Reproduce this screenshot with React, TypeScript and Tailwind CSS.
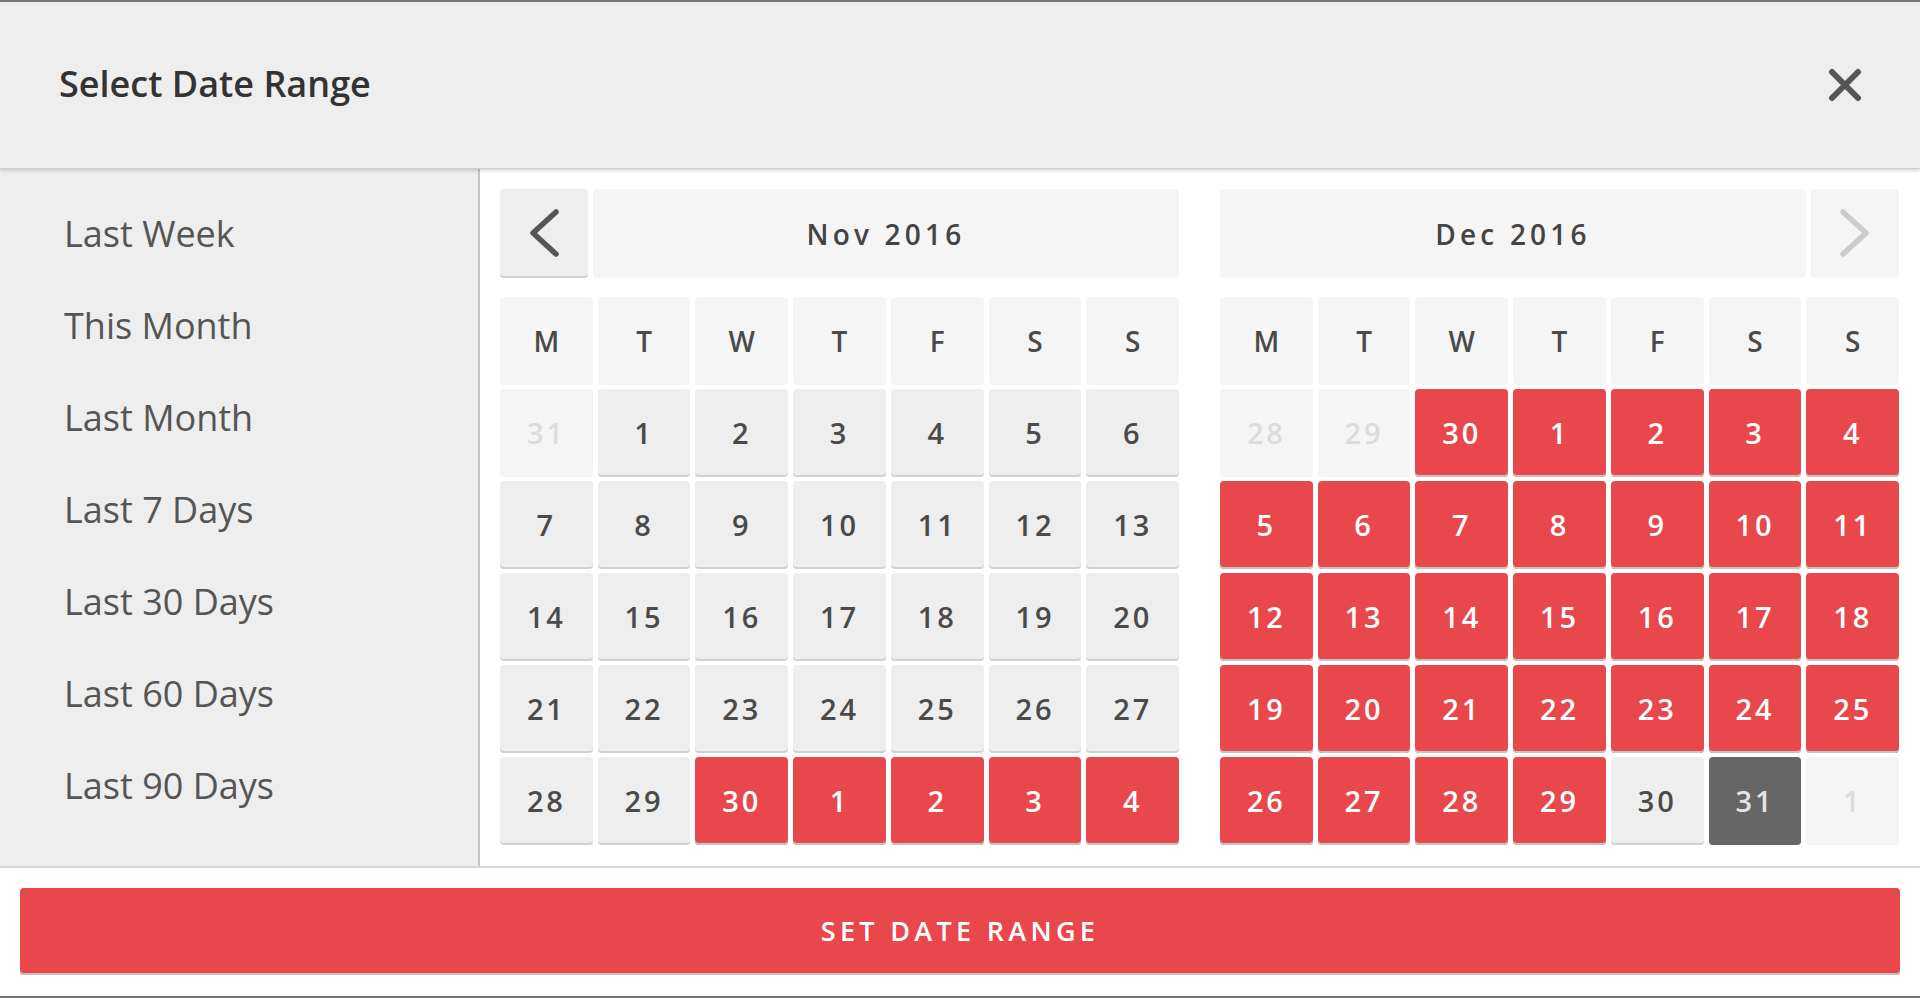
import React from "react";

type Kind = "out" | "normal" | "sel" | "dark";
type Cell = { d: number; k: Kind };

const WEEK = ["M", "T", "W", "T", "F", "S", "S"];

const r = (arr: number[], k: Kind): Cell[] => arr.map((d) => ({ d, k }));

const NOV: Cell[][] = [
  [{ d: 31, k: "out" }, ...r([1, 2, 3, 4, 5, 6], "normal")],
  r([7, 8, 9, 10, 11, 12, 13], "normal"),
  r([14, 15, 16, 17, 18, 19, 20], "normal"),
  r([21, 22, 23, 24, 25, 26, 27], "normal"),
  [...r([28, 29], "normal"), ...r([30, 1, 2, 3, 4], "sel")],
];

const DEC: Cell[][] = [
  [...r([28, 29], "out"), ...r([30, 1, 2, 3, 4], "sel")],
  r([5, 6, 7, 8, 9, 10, 11], "sel"),
  r([12, 13, 14, 15, 16, 17, 18], "sel"),
  r([19, 20, 21, 22, 23, 24, 25], "sel"),
  [...r([26, 27, 28, 29], "sel"), { d: 30, k: "normal" }, { d: 31, k: "dark" }, { d: 1, k: "out" }],
];

const SIDE = [
  "Last Week",
  "This Month",
  "Last Month",
  "Last 7 Days",
  "Last 30 Days",
  "Last 60 Days",
  "Last 90 Days",
];

function DayCell({ c }: { c: Cell }) {
  const base =
    "flex-1 h-[88px] rounded-[4px] flex items-center justify-center text-[29px] font-semibold tracking-[0.1em]";
  if (c.k === "out")
    return <div className={`${base} bg-[#f5f5f5] text-[#dcdcdc]`}>{c.d}</div>;
  if (c.k === "sel")
    return (
      <div className={`${base} bg-[#e8474b] text-white shadow-[inset_0_-2px_0_#c9c2c2]`}>{c.d}</div>
    );
  if (c.k === "dark")
    return <div className={`${base} bg-[#666666] text-[#e4e4e4]`}>{c.d}</div>;
  return (
    <div className={`${base} bg-[#eeeeee] text-[#4a4a4a] shadow-[inset_0_-2px_0_#d2d2d2]`}>{c.d}</div>
  );
}

function Chevron({ dir, color }: { dir: "l" | "r"; color: string }) {
  return (
    <svg width="30" height="48" viewBox="0 0 30 48" fill="none">
      {dir === "l" ? (
        <path d="M27 3 L4 24 L27 45" stroke={color} strokeWidth="5.5" strokeLinecap="round" strokeLinejoin="round" />
      ) : (
        <path d="M3 3 L26 24 L3 45" stroke={color} strokeWidth="5.5" strokeLinecap="round" strokeLinejoin="round" />
      )}
    </svg>
  );
}

function Calendar({ title, rows, side }: { title: string; rows: Cell[][]; side: "l" | "r" }) {
  return (
    <div className="w-[679px] flex flex-col">
      <div className="flex gap-[5px] h-[89px]">
        {side === "l" && (
          <div className="w-[88px] rounded-[4px] bg-[#eeeeee] shadow-[inset_0_-2px_0_#cfcfcf] flex items-center justify-center pb-[2px]">
            <Chevron dir="l" color="#555555" />
          </div>
        )}
        <div className="flex-1 rounded-[4px] bg-[#f5f5f5] flex items-center justify-center text-[28px] font-semibold tracking-[0.15em] text-[#444444]">
          {title}
        </div>
        {side === "r" && (
          <div className="w-[88px] rounded-[4px] bg-[#f5f5f5] flex items-center justify-center pb-[2px]">
            <Chevron dir="r" color="#cccccc" />
          </div>
        )}
      </div>
      <div className="mt-[19px] flex flex-col gap-[4px]">
        <div className="flex gap-[5px]">
          {WEEK.map((w, i) => (
            <div
              key={i}
              className="flex-1 h-[88px] rounded-[4px] bg-[#f5f5f5] flex items-center justify-center text-[28px] font-semibold text-[#4a4a4a]"
            >
              {w}
            </div>
          ))}
        </div>
        {rows.map((row, i) => (
          <div key={i} className="flex gap-[5px]">
            {row.map((c, j) => (
              <DayCell key={j} c={c} />
            ))}
          </div>
        ))}
      </div>
    </div>
  );
}

export default function App() {
  return (
    <div
      className="w-[1920px] h-[998px] flex flex-col bg-white border-t-2 border-b-2 border-[#767676] overflow-hidden"
      style={{ fontFamily: '"Open Sans", "Noto Sans", sans-serif' }}
    >
      <div className="relative z-10 h-[167px] shrink-0 bg-[#eeeeee] flex items-center justify-between pl-[59px] pr-[58px] border-b border-[#cfcfcf] shadow-[0_2px_3px_rgba(0,0,0,0.15)]">
        <div className="text-[36px] font-semibold text-[#333333] pb-[2px]">Select Date Range</div>
        <svg width="34" height="34" viewBox="0 0 34 34" fill="none">
          <path d="M4 4 L30 30 M30 4 L4 30" stroke="#555555" strokeWidth="6" strokeLinecap="round" />
        </svg>
      </div>
      <div className="h-[697px] shrink-0 flex">
        <div className="w-[480px] shrink-0 bg-[#eeeeee] border-r-2 border-[#c4c4c4] pt-[19px] pl-[64px]">
          {SIDE.map((s) => (
            <div key={s} className="h-[92px] flex items-center text-[36px] text-[#555555]">
              {s}
            </div>
          ))}
        </div>
        <div className="flex-1 flex justify-between pt-[20px] pl-[20px] pr-[21px]">
          <Calendar title="Nov 2016" rows={NOV} side="l" />
          <Calendar title="Dec 2016" rows={DEC} side="r" />
        </div>
      </div>
      <div className="flex-1 border-t-2 border-[#d6d6d6] bg-white px-[20px] pt-[20px]">
        <div className="h-[87px] rounded-[4px] bg-[#e8474b] shadow-[inset_0_-2px_0_#cdbcbc] flex items-center justify-center text-[27px] font-semibold tracking-[0.16em] text-white">
          SET DATE RANGE
        </div>
      </div>
    </div>
  );
}
